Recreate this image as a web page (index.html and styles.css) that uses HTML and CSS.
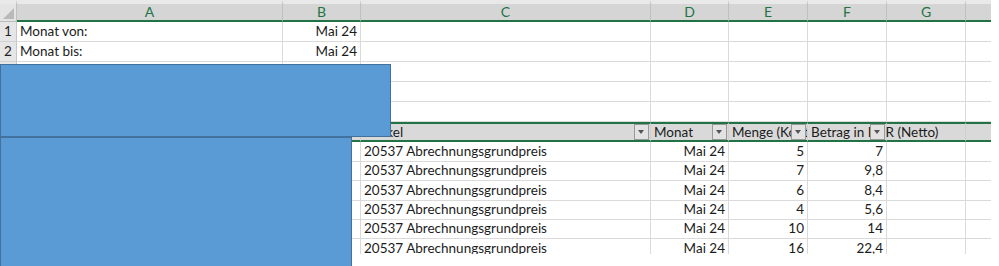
FILE: index.html
```html
<!DOCTYPE html>
<html lang="de">
<head>
  <meta charset="UTF-8" />
  <title>Abrechnung Mai 24</title>
  <link rel="stylesheet" href="styles.css">
</head>
<body>

<div class="sheet">
  <div class="row col-heads">
    <div class="corner"></div>
    <div class="ch">A</div>
    <div class="ch">B</div>
    <div class="ch">C</div>
    <div class="ch">D</div>
    <div class="ch">E</div>
    <div class="ch">F</div>
    <div class="ch">G</div>
    <div class="ch"></div>
  </div>

  <div class="row">
    <div class="rh">1</div>
    <div class="cell">Monat von:</div>
    <div class="cell num">Mai 24</div>
    <div class="cell"></div><div class="cell"></div><div class="cell"></div>
    <div class="cell"></div><div class="cell"></div><div class="cell end"></div>
  </div>
  <div class="row">
    <div class="rh">2</div>
    <div class="cell">Monat bis:</div>
    <div class="cell num">Mai 24</div>
    <div class="cell"></div><div class="cell"></div><div class="cell"></div>
    <div class="cell"></div><div class="cell"></div><div class="cell end"></div>
  </div>
  <div class="row">
    <div class="rh">3</div>
    <div class="cell"></div><div class="cell"></div>
    <div class="cell"></div><div class="cell"></div><div class="cell"></div>
    <div class="cell"></div><div class="cell"></div><div class="cell end"></div>
  </div>
  <div class="row">
    <div class="rh">4</div>
    <div class="cell"></div><div class="cell"></div>
    <div class="cell"></div><div class="cell"></div><div class="cell"></div>
    <div class="cell"></div><div class="cell"></div><div class="cell end"></div>
  </div>
  <div class="row">
    <div class="rh">5</div>
    <div class="cell"></div><div class="cell"></div>
    <div class="cell"></div><div class="cell"></div><div class="cell"></div>
    <div class="cell"></div><div class="cell"></div><div class="cell end"></div>
  </div>

  <!-- table header with filter buttons -->
  <div class="row thead">
    <div class="rh">6</div>
    <div class="cell"></div>
    <div class="cell"></div>
    <div class="cell clip">Artikel<span class="filter"></span></div>
    <div class="cell clip">Monat<span class="filter"></span></div>
    <div class="cell clip">Menge (Kontingent)<span class="filter"></span></div>
    <div class="cell spill">Betrag in EUR (Netto)<span class="filter"></span></div>
    <div class="cell"></div>
    <div class="cell end"></div>
  </div>

  <div class="row r19">
    <div class="rh">7</div><div class="cell"></div><div class="cell"></div>
    <div class="cell">20537 Abrechnungsgrundpreis</div>
    <div class="cell num">Mai 24</div><div class="cell num">5</div><div class="cell num">7</div>
    <div class="cell"></div><div class="cell end"></div>
  </div>
  <div class="row">
    <div class="rh">8</div><div class="cell"></div><div class="cell"></div>
    <div class="cell">20537 Abrechnungsgrundpreis</div>
    <div class="cell num">Mai 24</div><div class="cell num">7</div><div class="cell num">9,8</div>
    <div class="cell"></div><div class="cell end"></div>
  </div>
  <div class="row r19">
    <div class="rh">9</div><div class="cell"></div><div class="cell"></div>
    <div class="cell">20537 Abrechnungsgrundpreis</div>
    <div class="cell num">Mai 24</div><div class="cell num">6</div><div class="cell num">8,4</div>
    <div class="cell"></div><div class="cell end"></div>
  </div>
  <div class="row r19">
    <div class="rh">10</div><div class="cell"></div><div class="cell"></div>
    <div class="cell">20537 Abrechnungsgrundpreis</div>
    <div class="cell num">Mai 24</div><div class="cell num">4</div><div class="cell num">5,6</div>
    <div class="cell"></div><div class="cell end"></div>
  </div>
  <div class="row">
    <div class="rh">11</div><div class="cell"></div><div class="cell"></div>
    <div class="cell">20537 Abrechnungsgrundpreis</div>
    <div class="cell num">Mai 24</div><div class="cell num">10</div><div class="cell num">14</div>
    <div class="cell"></div><div class="cell end"></div>
  </div>
  <div class="row cut">
    <div class="rh">12</div><div class="cell"></div><div class="cell"></div>
    <div class="cell">20537 Abrechnungsgrundpreis</div>
    <div class="cell num">Mai 24</div><div class="cell num">16</div><div class="cell num">22,4</div>
    <div class="cell"></div><div class="cell end"></div>
  </div>
</div>

<!-- blue shapes placed over the sheet -->
<div class="shape shape-top"></div>
<div class="shape shape-bottom"></div>

</body>
</html>
```

FILE: styles.css
```css
:root {
  --cols: 17px 266px 78px 290px 78px 79px 79px 79px 25px;
  --grid: #dadada;
  --green: #217346;
  --text: #1b1b1b;
}

body {
  margin: 0;
  background: #fff;
  color: var(--text);
  font-family: Lato, "Open Sans", sans-serif;
  font-size: 13.5px;
  height: 266px;
  overflow: hidden;
  position: relative;
}

.sheet {
  width: 991px;
}

.row {
  display: grid;
  grid-template-columns: var(--cols);
  height: 20px;
}

.row.r19 {
  height: 19px;
}

/* last visible row, cut off at the window edge */
.row.cut {
  height: 15px;
  overflow: hidden;
}

.row.cut .cell {
  border-bottom: none;
}

/* column letters */
.col-heads {
  height: 22px;
}

.ch,
.corner {
  box-sizing: border-box;
  background: #d5d5d5;
  border-top: 4px solid #e9e9e9;
  border-bottom: 2px solid var(--green);
  border-right: 1px solid #bfbfbf;
  color: var(--green);
  text-align: center;
  line-height: 16px;
  font-size: 14px;
}

.ch:last-child {
  border-right: none;
}

.corner {
  position: relative;
  background: #e4e4e4;
  border-bottom-color: #bcbcbc;
  border-bottom-width: 1px;
}

.corner::after {
  content: "";
  position: absolute;
  right: 2px;
  bottom: 2px;
  border-left: 11px solid transparent;
  border-bottom: 11px solid #b9b9b9;
}

/* row numbers */
.rh {
  box-sizing: border-box;
  background: #e6e6e6;
  border-right: 1px solid #c6c6c6;
  border-bottom: 1px solid #d2d2d2;
  padding-left: 4px;
  line-height: 19px;
  color: #222;
}

.cell {
  box-sizing: border-box;
  border-right: 1px solid var(--grid);
  border-bottom: 1px solid var(--grid);
  padding: 0 3px;
  line-height: 19px;
  white-space: nowrap;
  overflow: hidden;
}

.cell.num {
  text-align: right;
  padding-right: 3px;
}

.cell.end {
  border-right: none;
}

/* table header row */
.thead .cell,
.thead .rh {
  background: #d9d9d9;
  border-top: 2px solid var(--green);
  border-bottom: 2px solid var(--green);
  border-right-color: #cfcfcf;
  line-height: 16px;
}

.thead .cell.clip {
  position: relative;
}

.thead .cell.spill {
  position: relative;
  overflow: visible;
  z-index: 1;
}

.filter {
  position: absolute;
  right: 1px;
  top: 0;
  width: 15px;
  height: 16px;
  box-sizing: border-box;
  background: #e2e2e2;
  border: 1px solid #999;
}

.filter::after {
  content: "";
  position: absolute;
  left: 3px;
  top: 5px;
  border-left: 3.5px solid transparent;
  border-right: 3.5px solid transparent;
  border-top: 4px solid #555;
}

/* shapes drawn on top of the sheet */
.shape {
  position: absolute;
  left: 0;
  box-sizing: border-box;
  background: #5b9bd5;
  border: 1px solid #41719c;
}

.shape-top {
  top: 64px;
  width: 391px;
  height: 73px;
}

.shape-bottom {
  top: 137px;
  width: 352px;
  height: 140px;
}
```
